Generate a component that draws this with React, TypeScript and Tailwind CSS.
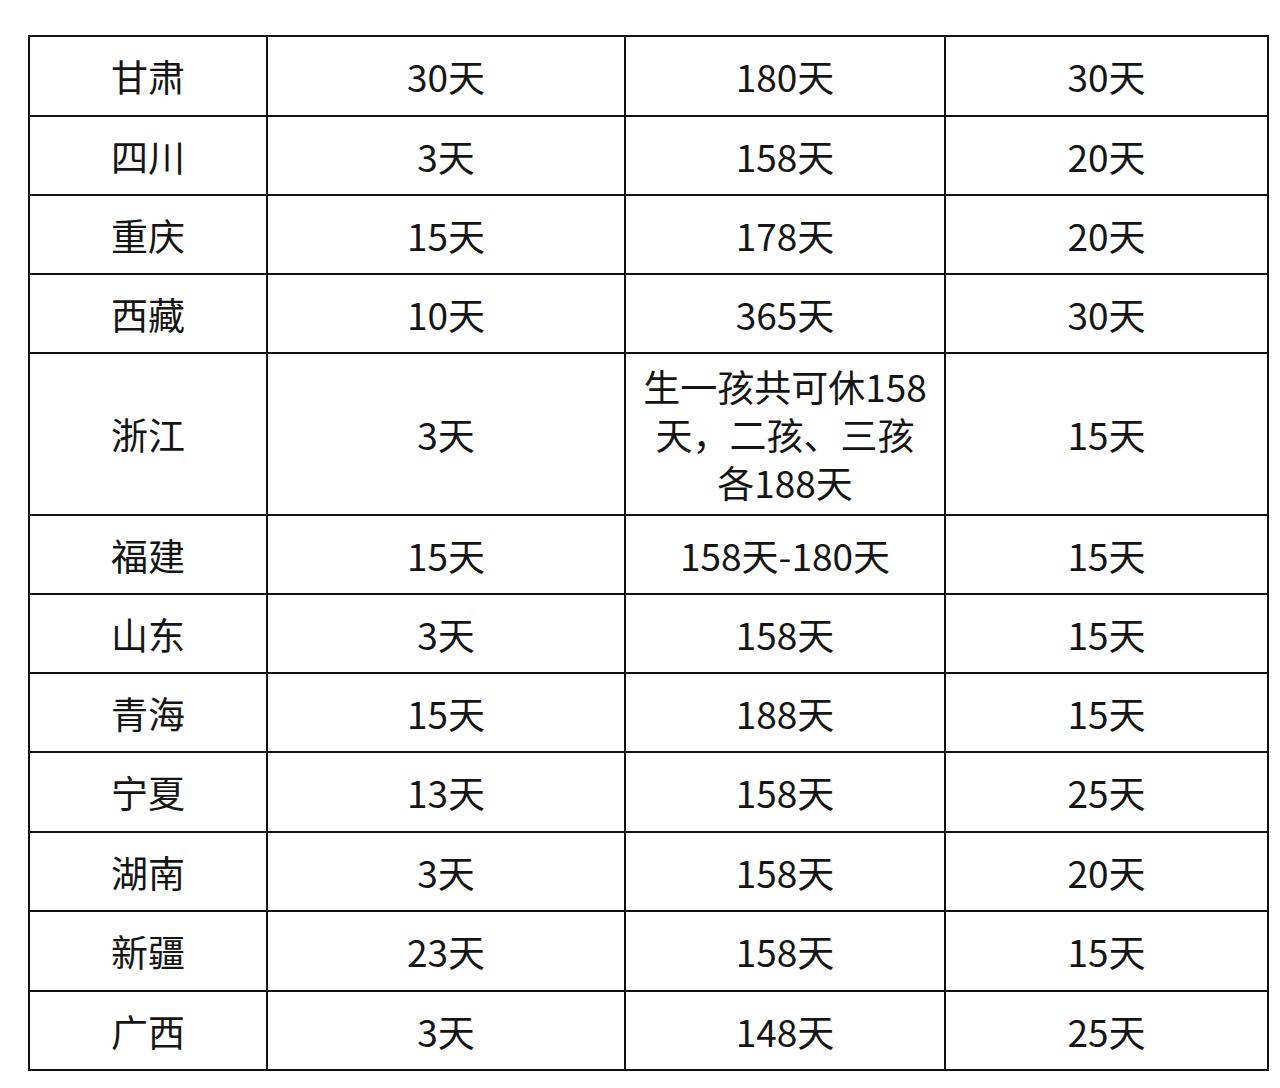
import React from 'react';

const rows: [string, string, React.ReactNode, string][] = [
  ['甘肃', '30天', '180天', '30天'],
  ['四川', '3天', '158天', '20天'],
  ['重庆', '15天', '178天', '20天'],
  ['西藏', '10天', '365天', '30天'],
  [
    '浙江',
    '3天',
    <div className="flex flex-col items-center">
      <div className="h-[48px] leading-[48px]">生一孩共可休158</div>
      <div className="h-[48px] leading-[48px]">天，二孩、三孩</div>
      <div className="h-[48px] leading-[48px]">各188天</div>
    </div>,
    '15天',
  ],
  ['福建', '15天', '158天-180天', '15天'],
  ['山东', '3天', '158天', '15天'],
  ['青海', '15天', '188天', '15天'],
  ['宁夏', '13天', '158天', '25天'],
  ['湖南', '3天', '158天', '20天'],
  ['新疆', '23天', '158天', '15天'],
  ['广西', '3天', '148天', '25天'],
];

const heights = [80, 79, 79, 79, 162, 79, 79, 79, 80, 79, 80, 79];

export default function App() {
  return (
    <div
      className="w-[1280px] h-[1088px] bg-white pt-[35px] pl-[28px]"
      style={{ fontFamily: '"Noto Sans CJK SC", "Noto Sans", sans-serif' }}
    >
      <table className="border-collapse table-fixed w-[1239px] text-[37px] text-[#151515]">
        <colgroup>
          <col className="w-[238px]" />
          <col className="w-[358px]" />
          <col className="w-[320px]" />
          <col className="w-[323px]" />
        </colgroup>
        <tbody>
          {rows.map((r, i) => (
            <tr key={i} style={{ height: heights[i] }}>
              {r.map((c, j) => (
                <td
                  key={j}
                  className="border-2 border-[#111] text-center align-middle p-0 leading-[48px]"
                >
                  {c}
                </td>
              ))}
            </tr>
          ))}
        </tbody>
      </table>
    </div>
  );
}
